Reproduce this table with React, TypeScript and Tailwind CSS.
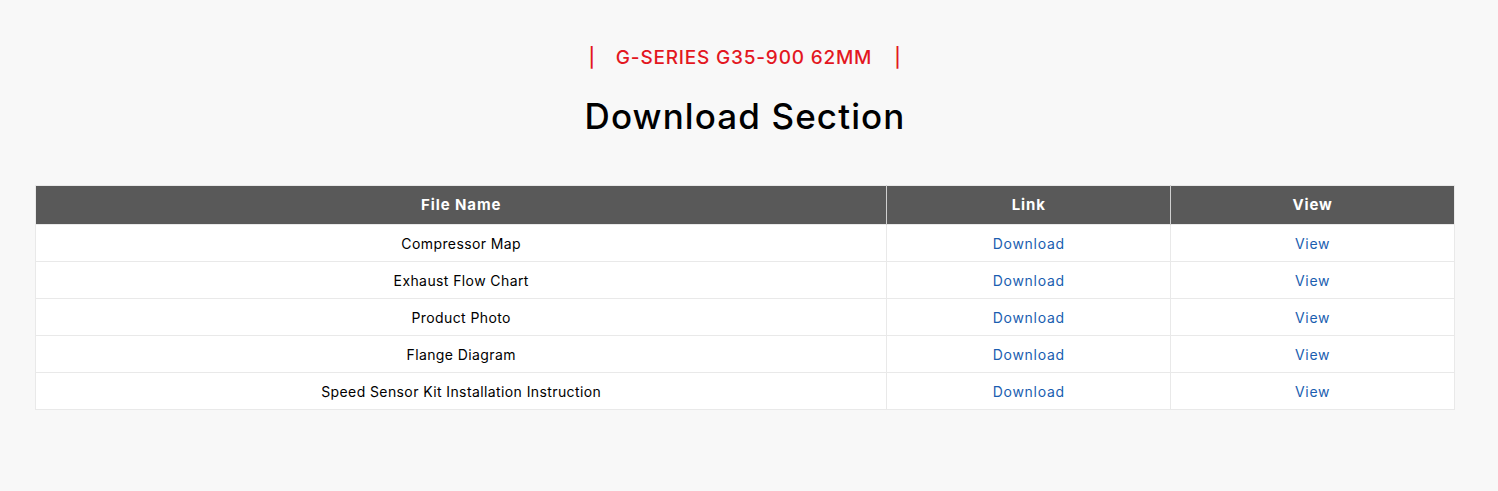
import React from 'react';

const files = [
  'Compressor Map',
  'Exhaust Flow Chart',
  'Product Photo',
  'Flange Diagram',
  'Speed Sensor Kit Installation Instruction',
];

const App: React.FC = () => {
  return (
    <div className="min-h-[491px] bg-[#f8f8f8] pl-[35px] pr-[43px] pt-[44px] font-['Inter',sans-serif]">
      <p className="text-center text-[19px] font-medium text-[#e3171f] tracking-[0.8px]">
        <span>|</span>
        <span className="px-[20px]">G-SERIES G35-900 62MM</span>
        <span className="pl-[2px]">|</span>
      </p>
      <h2 className="mt-[22px] text-center text-[35px] font-medium text-black leading-[42px] tracking-[1.1px]">Download Section</h2>

      <table className="mt-[48px] w-full border-collapse border border-[#e9e9e9] bg-white text-[14px] tracking-[0.4px]">
        <thead>
          <tr className="bg-[#595959] text-[15px] text-white tracking-[0.9px]">
            <th className="h-[39px] w-[60%] border-r border-[#d0d0d0] pt-[1px] font-bold">File Name</th>
            <th className="h-[39px] w-[20%] border-r border-[#d0d0d0] pt-[1px] font-bold">Link</th>
            <th className="h-[39px] w-[20%] pt-[1px] font-bold">View</th>
          </tr>
        </thead>
        <tbody>
          {files.map((name) => (
            <tr key={name} className="border-t border-[#e9e9e9]">
              <td className="h-[37px] border-r border-[#e9e9e9] pt-[1px] text-center text-black">{name}</td>
              <td className="h-[37px] border-r border-[#e9e9e9] pt-[1px] text-center">
                <a href="#" className="text-[#1a5eb0] tracking-[0.7px]">Download</a>
              </td>
              <td className="h-[37px] pt-[1px] text-center">
                <a href="#" className="text-[#1a5eb0] tracking-[0.7px]">View</a>
              </td>
            </tr>
          ))}
        </tbody>
      </table>
    </div>
  );
};

export default App;
